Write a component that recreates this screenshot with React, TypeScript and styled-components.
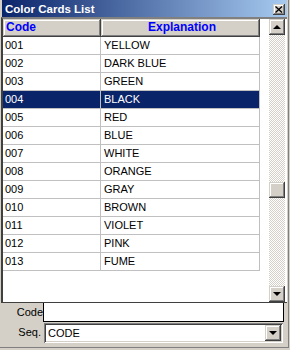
import styled, { createGlobalStyle } from "styled-components";

const GlobalStyle = createGlobalStyle`
  html, body {
    margin: 0;
    padding: 0;
    background: #d4d0c8;
  }
  body {
    font-family: "Liberation Sans", Arial, sans-serif;
    font-size: 11px;
  }
  * {
    box-sizing: border-box;
  }
`;

const raised = `
  background: #d4d0c8;
  box-shadow: inset -1px -1px #404040, inset 1px 1px #d4d0c8,
    inset -2px -2px #808080, inset 2px 2px #ffffff;
`;

const Screen = styled.div`
  width: 290px;
  height: 350px;
  overflow: hidden;
  background: #d4d0c8;
`;

const Window = styled.div`
  width: 289px;
  height: 348px;
  padding: 0 1px;
  border-right: 1px solid #808080;
  border-bottom: 1px solid #808080;
  display: flex;
  flex-direction: column;
`;

const TitleBar = styled.div`
  height: 17px;
  margin-left: 1px;
  padding: 0 2px 0 3px;
  display: flex;
  align-items: center;
  justify-content: space-between;
  background: linear-gradient(to right, #0a246a, #a6caf0);
  color: #ffffff;
  font-weight: bold;
  font-size: 11.5px;
`;

const CloseButton = styled.div`
  ${raised}
  width: 12px;
  height: 11px;
  display: flex;
  align-items: center;
  justify-content: center;
  margin-top: 1px;
`;

const GridFrame = styled.div`
  height: 286px;
  display: flex;
  border-style: solid;
  border-width: 2px 0 1px 2px;
  border-color: #808080 transparent #404040 #404040;
  background: #ffffff;
`;

const TableArea = styled.div`
  width: 266px;
  display: flex;
  flex-direction: column;
`;

const HeaderRow = styled.div`
  display: flex;
  height: 18px;
`;

const HeaderCell = styled.div<{ $w: number; $center?: boolean }>`
  ${raised}
  width: ${(p) => p.$w}px;
  height: 18px;
  line-height: 17px;
  padding-left: 3px;
  color: #0000ff;
  font-weight: bold;
  font-size: 12px;
  text-align: ${(p) => (p.$center ? "center" : "left")};
`;

const Row = styled.div<{ $selected?: boolean }>`
  display: flex;
  width: 257px;
  height: 18px;
  background: ${(p) => (p.$selected ? "#0a246a" : "#ffffff")};
  color: ${(p) => (p.$selected ? "#ffffff" : "#000000")};
`;

const Cell = styled.div<{ $w: number; $pad: number }>`
  width: ${(p) => p.$w}px;
  height: 18px;
  line-height: 17px;
  padding-left: ${(p) => p.$pad}px;
  border-right: 1px solid #c0c0c0;
  border-bottom: 1px solid #c0c0c0;
  white-space: nowrap;
`;

const ScrollBar = styled.div`
  width: 16px;
  display: flex;
  flex-direction: column;
`;

const ScrollButton = styled.div`
  ${raised}
  width: 16px;
  height: 16px;
  display: flex;
  align-items: center;
  justify-content: center;
`;

const Track = styled.div<{ $h?: number }>`
  ${(p) => (p.$h ? `height: ${p.$h}px;` : "flex: 1;")}
  background-color: #ffffff;
  background-image: conic-gradient(
    #d4d0c8 25%,
    #ffffff 0 50%,
    #d4d0c8 0 75%,
    #ffffff 0
  );
  background-size: 2px 2px;
`;

const Thumb = styled.div`
  ${raised}
  height: 16px;
`;

const Arrow = styled.span<{ $down?: boolean }>`
  width: 0;
  height: 0;
  border-left: 4px solid transparent;
  border-right: 4px solid transparent;
  ${(p) =>
    p.$down
      ? "border-top: 4px solid #000000;"
      : "border-bottom: 4px solid #000000;"}
`;

const FieldRow = styled.div<{ $gap?: number }>`
  display: flex;
  align-items: stretch;
  margin-top: ${(p) => p.$gap ?? 0}px;
`;

const Label = styled.div<{ $w: number; $pad: number }>`
  width: ${(p) => p.$w}px;
  padding-right: ${(p) => p.$pad}px;
  text-align: right;
  line-height: 18px;
  color: #000000;
`;

const TextBox = styled.div`
  width: 241px;
  height: 19px;
  background: #ffffff;
  border: 1px solid #000000;
  border-top: none;
`;

const Select = styled.div`
  width: 239px;
  height: 20px;
  display: flex;
  align-items: center;
  justify-content: space-between;
  background: #ffffff;
  box-shadow: inset 1px 1px #808080, inset -1px -1px #ffffff,
    inset 2px 2px #404040, inset -2px -2px #d4d0c8;
  padding: 2px 2px 2px 4px;
`;

const SelectButton = styled(ScrollButton)`
  height: 16px;
`;

const rows = [
  ["001", "YELLOW"],
  ["002", "DARK BLUE"],
  ["003", "GREEN"],
  ["004", "BLACK"],
  ["005", "RED"],
  ["006", "BLUE"],
  ["007", "WHITE"],
  ["008", "ORANGE"],
  ["009", "GRAY"],
  ["010", "BROWN"],
  ["011", "VIOLET"],
  ["012", "PINK"],
  ["013", "FUME"],
];

const App = () => {
  return (
    <Screen>
      <GlobalStyle />
      <Window>
        <TitleBar>
          Color Cards List
          <CloseButton>
            <svg width="8" height="7" viewBox="0 0 8 7">
              <path d="M0.5 0.5 L7 6.5 M7 0.5 L0.5 6.5" stroke="#000" strokeWidth="1.3" />
            </svg>
          </CloseButton>
        </TitleBar>
        <GridFrame>
          <TableArea>
            <HeaderRow>
              <HeaderCell $w={98}>Code</HeaderCell>
              <HeaderCell $w={159} $center>
                Explanation
              </HeaderCell>
            </HeaderRow>
            {rows.map(([code, name], i) => (
              <Row key={code} $selected={i === 3}>
                <Cell $w={98} $pad={2}>
                  {code}
                </Cell>
                <Cell $w={159} $pad={3}>
                  {name}
                </Cell>
              </Row>
            ))}
          </TableArea>
          <ScrollBar>
            <ScrollButton>
              <Arrow />
            </ScrollButton>
            <Track $h={147} />
            <Thumb />
            <Track />
            <ScrollButton>
              <Arrow $down />
            </ScrollButton>
          </ScrollBar>
        </GridFrame>
        <FieldRow>
          <Label $w={42} $pad={0}>
            Code
          </Label>
          <TextBox />
        </FieldRow>
        <FieldRow $gap={1}>
          <Label $w={43} $pad={3}>
            Seq.
          </Label>
          <Select>
            CODE
            <SelectButton>
              <Arrow $down />
            </SelectButton>
          </Select>
        </FieldRow>
      </Window>
    </Screen>
  );
};

export default App;
